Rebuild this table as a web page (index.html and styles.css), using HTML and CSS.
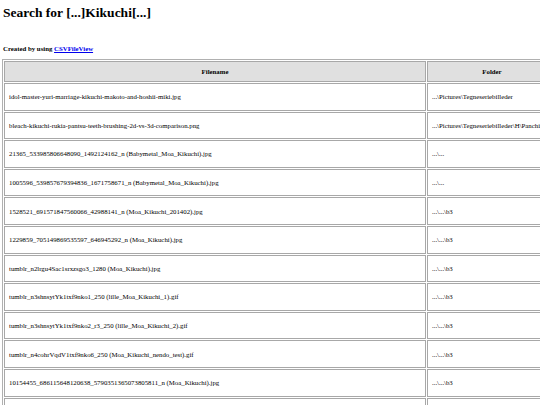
FILE: index.html
```html
<!DOCTYPE html>
<html>
<head>
<meta charset="utf-8">
<title>Search for [...]Kikuchi[...]</title>
<link rel="stylesheet" href="styles.css">
</head>
<body>
<h3 class="title">Search for [...]Kikuchi[...]</h3>
<p class="credit"><b>Created by using <a href="#" class="link">CSVFileView</a></b></p>
<table class="report">
<tr class="head"><th class="c-file">Filename</th><th class="c-folder">Folder</th></tr>
<tr><td>idol-master-yuri-marriage-kikuchi-makoto-and-hoshii-miki.jpg</td><td>...\Pictures\Tegneseriebilleder</td></tr>
<tr><td>bleach-kikuchi-rukia-pantsu-teeth-brushing-2d-vs-3d-comparison.png</td><td>...\Pictures\Tegneseriebilleder\H\Panchira</td></tr>
<tr><td>21365_533985806648090_1492124162_n (Babymetal_Moa_Kikuchi).jpg</td><td>...\...</td></tr>
<tr><td>1005596_539857679394836_1671758671_n (Babymetal_Moa_Kikuchi).jpg</td><td>...\...</td></tr>
<tr><td>1528521_691571847560066_42988141_n (Moa_Kikuchi_201402).jpg</td><td>...\...\b3</td></tr>
<tr><td>1229859_705149869535597_646945292_n (Moa_Kikuchi).jpg</td><td>...\...\b3</td></tr>
<tr><td>tumblr_n2lrgu4Sac1srxzsgo3_1280 (Moa_Kikuchi).jpg</td><td>...\...\b3</td></tr>
<tr><td>tumblr_n3shnsytYk1txf9nko1_250 (lille_Moa_Kikuchi_1).gif</td><td>...\...\b3</td></tr>
<tr><td>tumblr_n3shnsytYk1txf9nko2_r3_250 (lille_Moa_Kikuchi_2).gif</td><td>...\...\b3</td></tr>
<tr><td>tumblr_n4cohrVqdV1txf9nko6_250 (Moa_Kikuchi_nendo_test).gif</td><td>...\...\b3</td></tr>
<tr><td>10154455_686115648120638_5790351365073805811_n (Moa_Kikuchi).jpg</td><td>...\...\b3</td></tr>
<tr><td>&nbsp;</td><td>&nbsp;</td></tr>
</table>
</body>
</html>
```
FILE: styles.css
```css
html, body {
  margin: 0;
  padding: 0;
  background: #ffffff;
}
body {
  padding: 3px 3px 3px 2px;
  font-family: "Liberation Serif", "Times New Roman", serif;
  color: #000;
  width: 600px;
}
.title {
  font-size: 13.5px;
  font-weight: bold;
  margin: 0 0 0 1px;
  line-height: 20px;
}
.credit {
  font-size: 6.8px;
  margin: 21px 0 0 1px;
  line-height: 9px;
}
.link {
  color: #0000ee;
  text-decoration: underline;
}
.report {
  margin-top: 6px;
  border-collapse: separate;
  border-spacing: 1px;
  border: 1px solid #b0b0b0;
  width: 557px;
  font-size: 6.8px;
}
.report th, .report td {
  border: 1px solid #a8a8a8;
  padding: 0 4px;
}
.report th {
  background: #e0e0e0;
  font-weight: bold;
  text-align: center;
  height: 19px;
}
.report td {
  height: 25.6px;
  text-align: left;
  white-space: nowrap;
  overflow: hidden;
}
.c-file {
  width: 412px;
}
```
